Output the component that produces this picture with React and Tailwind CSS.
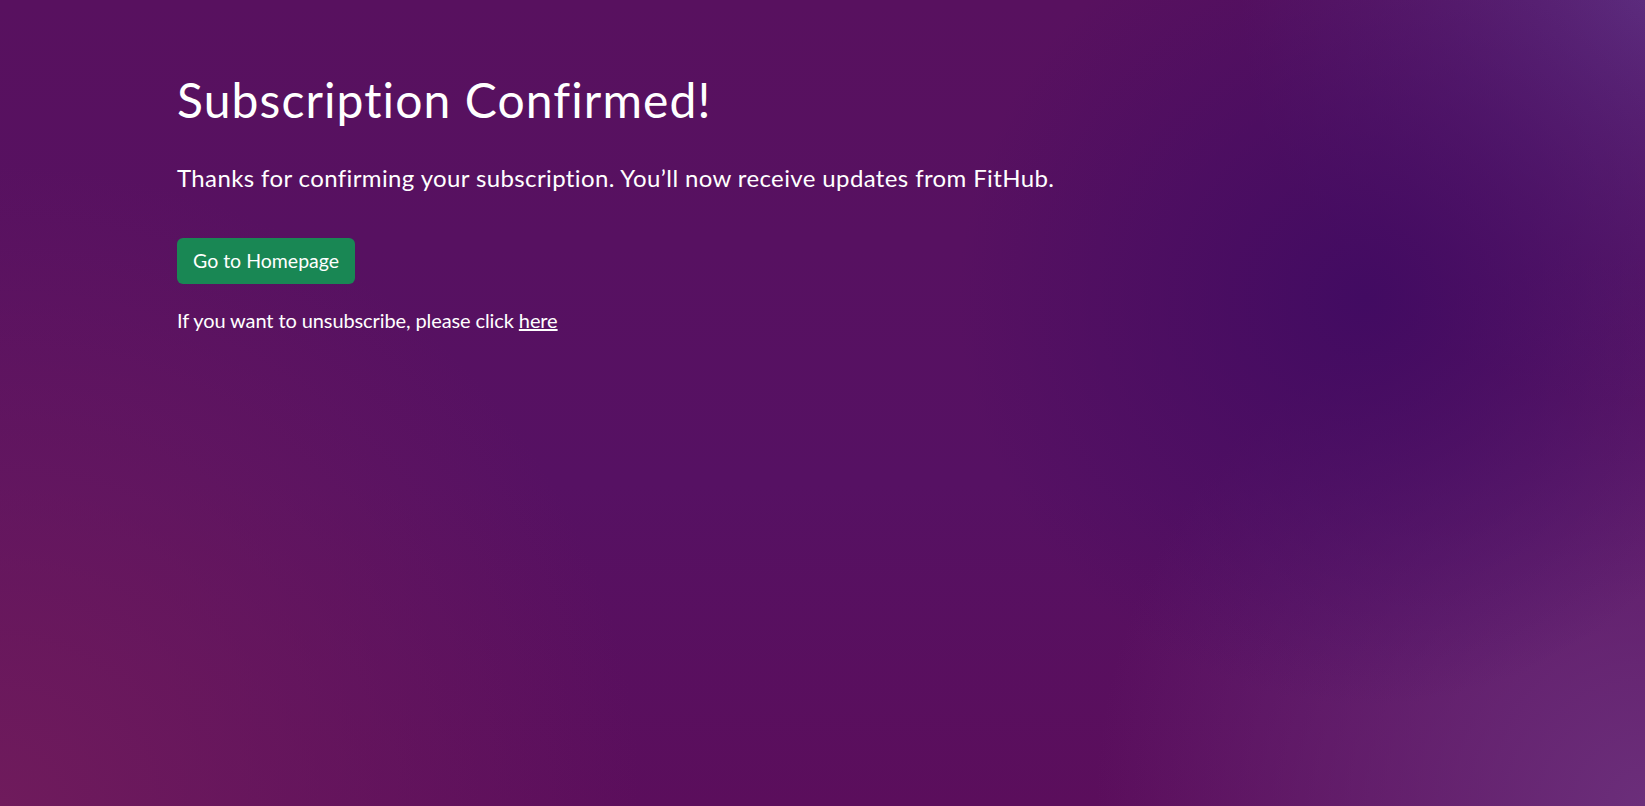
export default function App() {
  return (
    <div
      className="min-h-screen w-full text-white font-['Lato',sans-serif] [font-variant-ligatures:none] bg-[#561060] bg-[radial-gradient(circle_at_83%_37%,#420b62_0%,rgba(66,11,98,0)_28%),radial-gradient(circle_at_100%_0%,#5c2b7d_0%,rgba(92,43,125,0)_22%),radial-gradient(circle_at_100%_100%,#6b2e7a_0%,rgba(107,46,122,0)_30%),radial-gradient(circle_at_0%_100%,#6f1b5c_0%,rgba(111,27,92,0)_35%),linear-gradient(180deg,#58115f_0%,#561163_60%,#5b0e5c_100%)]"
    >
      <div className="pl-[177px] pt-[71px]">
        <h1 className="text-[48px] leading-[1.2] font-normal tracking-[1.1px]">Subscription Confirmed!</h1>
        <p className="mt-[31px] text-[24px] leading-[36px] tracking-[0.38px]">
          Thanks for confirming your subscription. You’ll now receive updates from FitHub.
        </p>
        <a
          href="#"
          className="mt-[42px] inline-block rounded-md bg-[#198754] px-4 py-2 text-[19.5px] leading-[30px]"
        >
          Go to Homepage
        </a>
        <p className="mt-[21px] text-[20px] leading-[30px] tracking-[-0.1px]">
          If you want to unsubscribe, please click{" "}
          <a href="#" className="underline">
            here
          </a>
        </p>
      </div>
    </div>
  );
}
